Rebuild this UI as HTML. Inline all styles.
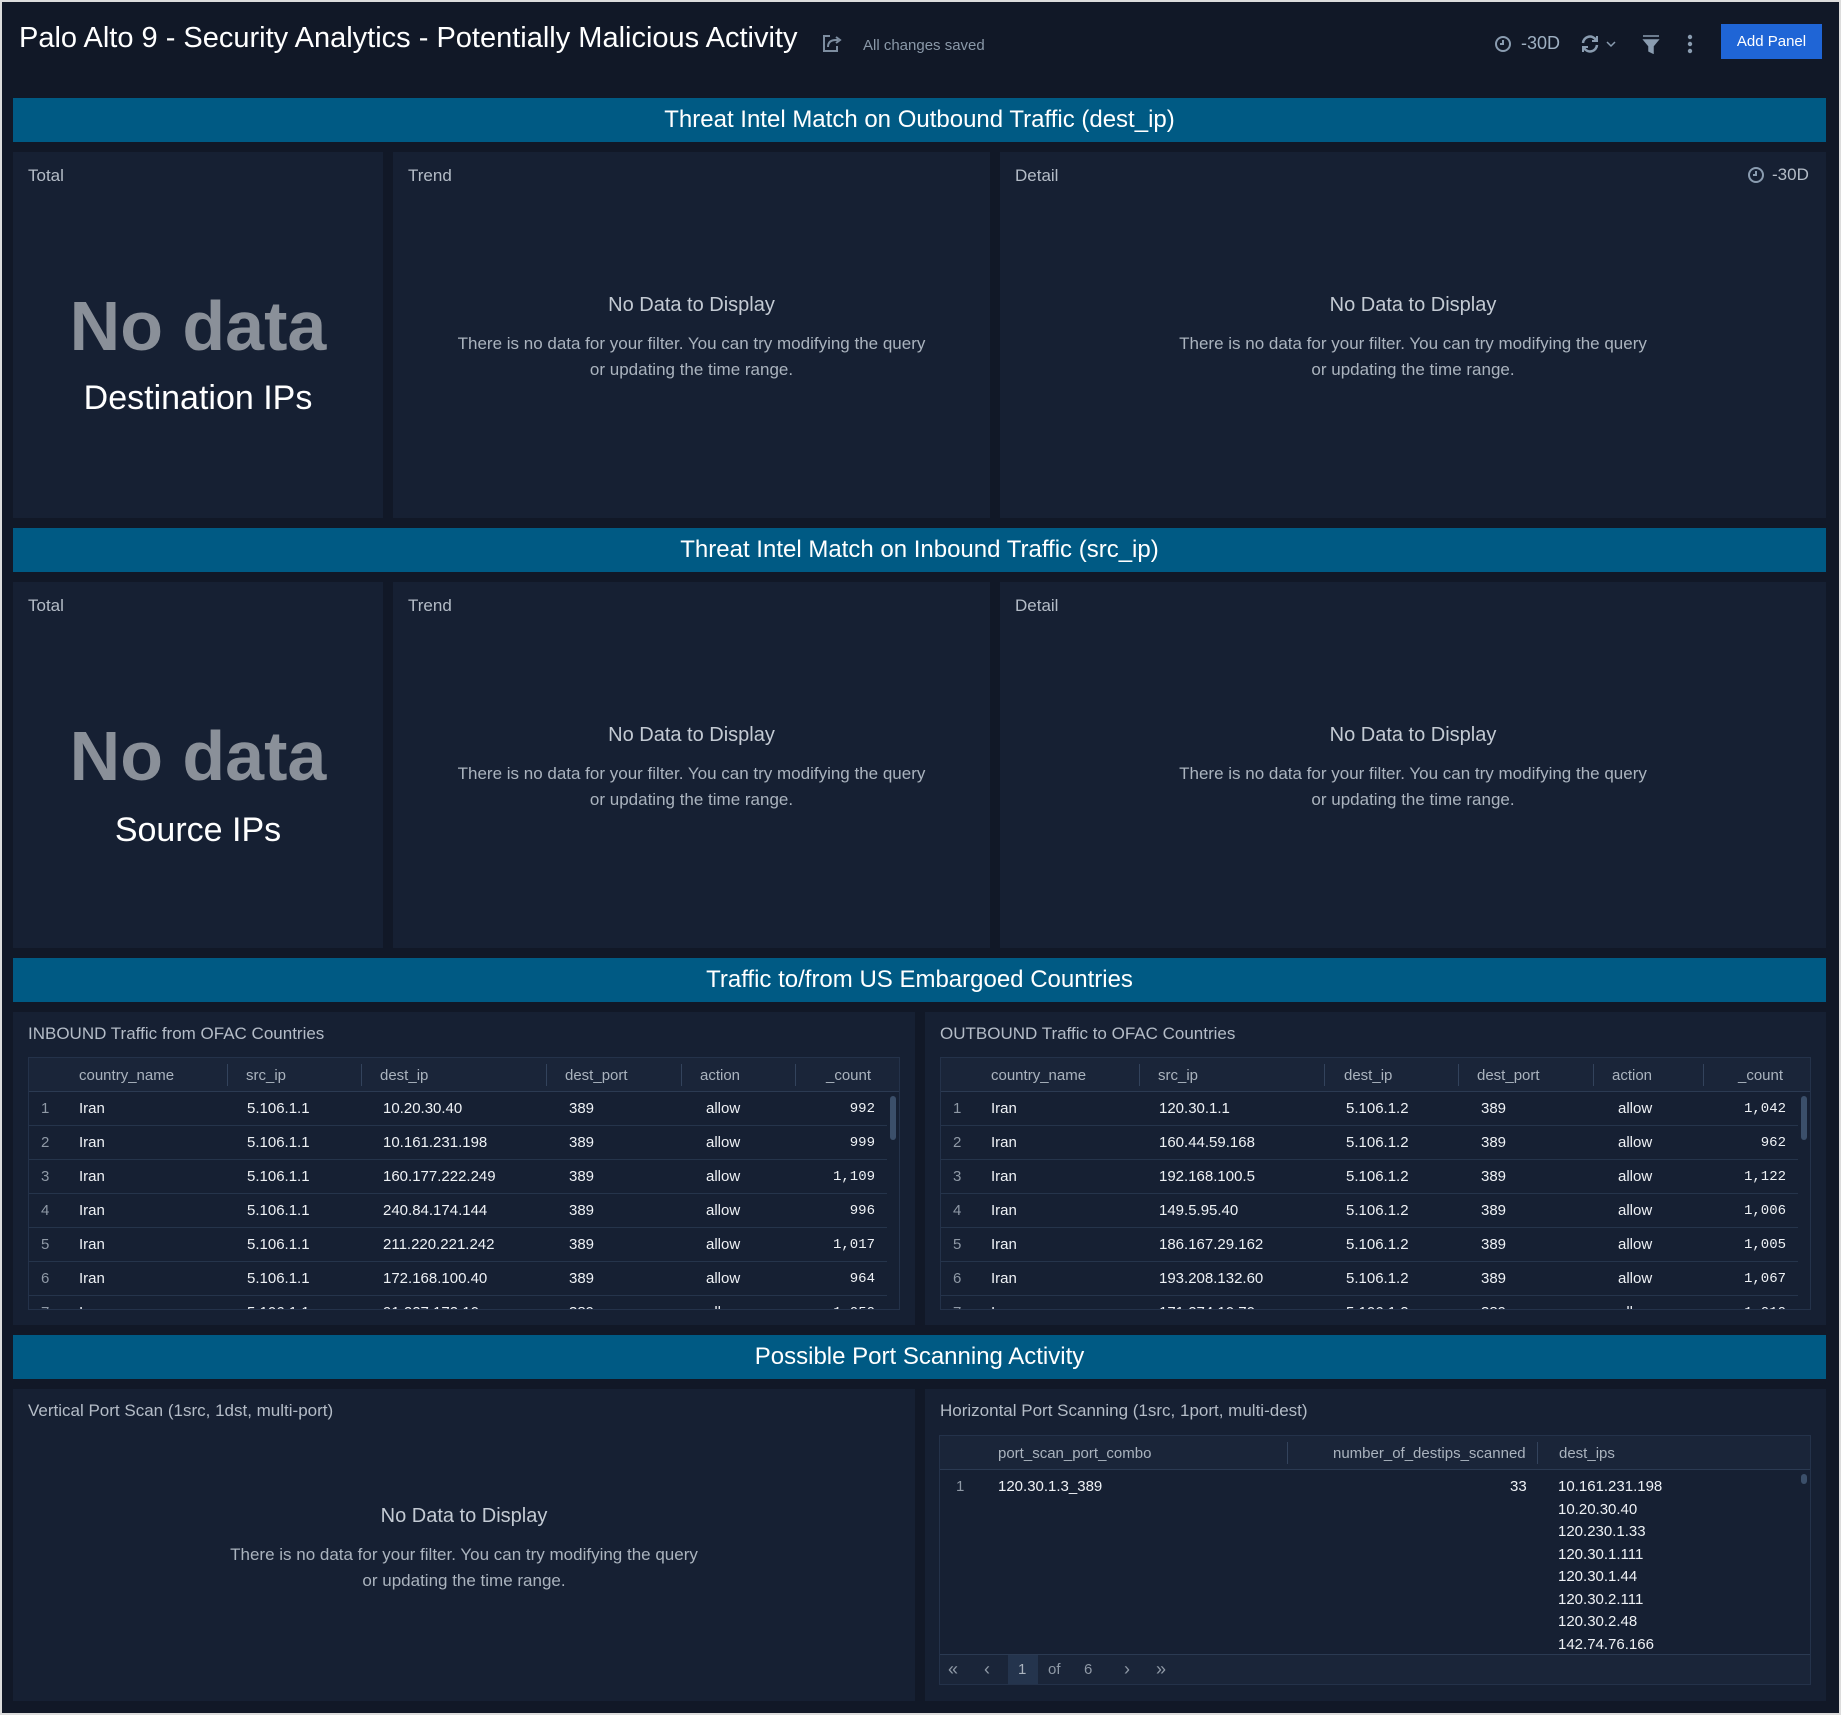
<!DOCTYPE html>
<html><head><meta charset="utf-8"><style>
*{margin:0;padding:0;box-sizing:border-box}
body{width:1841px;height:1715px;background:#dcdcdc;font-family:"Liberation Sans",sans-serif;position:relative;overflow:hidden}
#pg{position:absolute;left:2px;top:2px;width:1837px;height:1711px;background:#111827}
.a{position:absolute}
.band{position:absolute;left:13px;width:1813px;height:44px;background:#005a84;color:#fff;font-size:24px;text-align:center;line-height:44px}
.p{position:absolute;background:#162033}
.pt{position:absolute;left:15px;top:14px;color:#b4bcc7;font-size:17px}
.nd{position:absolute;left:0;right:0;text-align:center}
.nd b{display:block;color:#c3cad3;font-size:20px;font-weight:normal;margin-bottom:14px}
.nd span{color:#aab3be;font-size:17px;line-height:26px}
.big{position:absolute;left:0;right:0;text-align:center;color:#8a9099;font-size:70px;font-weight:bold}
.sub{position:absolute;left:0;right:0;text-align:center;color:#fff;font-size:34px}
.tb{position:absolute;border:1px solid #24324a;overflow:hidden;background:#162033}
.th{position:absolute;left:0;right:0;top:0;height:34px;background:#1a2539;border-bottom:1px solid #2b3a52}
.c{position:absolute;font-size:15px;color:#eef1f5;white-space:nowrap}
.h{color:#aab3be;top:9px}
.sep{position:absolute;top:6px;width:1px;height:22px;background:#33435c}
.r{position:absolute;left:0;right:12px;height:34px;border-bottom:1px solid #25344b}
.n{color:#8f99a6}
.m{font-family:"Liberation Mono",monospace;font-size:14px}
</style></head><body><div id="pg"></div>

<div class="a" style="left:19px;top:22px;color:#fff;font-size:29px">Palo Alto 9 - Security Analytics - Potentially Malicious Activity</div>
<svg class="a" style="left:822px;top:33px" width="20" height="20" viewBox="0 0 20 20"><path d="M8 3H2v15h13v-5" fill="none" stroke="#7d8da0" stroke-width="2"/><path d="M6 14c0-5 3-7 8-7h2M14 4l4 3-4 3" fill="none" stroke="#7d8da0" stroke-width="2"/></svg>
<div class="a" style="left:863px;top:37px;color:#8a98a8;font-size:15px">All changes saved</div>
<svg class="a" style="left:1494px;top:35px" width="18" height="18" viewBox="0 0 18 18"><circle cx="9" cy="9" r="7" fill="none" stroke="#8a9cb0" stroke-width="2"/><path d="M9 5v4H6" fill="none" stroke="#8a9cb0" stroke-width="2"/></svg>
<div class="a" style="left:1521px;top:33px;color:#9fb0c2;font-size:18px">-30D</div>
<svg class="a" style="left:1580px;top:34px" width="40" height="20" viewBox="0 0 40 20"><path d="M3 9a7 7 0 0 1 13-3M17 11a7 7 0 0 1-13 3" fill="none" stroke="#8a9cb0" stroke-width="2.5"/><path d="M17 2v5h-5M3 18v-5h5" fill="none" stroke="#8a9cb0" stroke-width="2"/><path d="M27 8l4 4 4-4" fill="none" stroke="#8a9cb0" stroke-width="1.5"/></svg>
<svg class="a" style="left:1641px;top:34px" width="20" height="20" viewBox="0 0 20 20"><path d="M2 2h16M3 6h14l-5 6v7l-4-2v-5z" fill="#8a9cb0" stroke="#8a9cb0" stroke-width="1.5"/></svg>
<svg class="a" style="left:1686px;top:33px" width="8" height="22" viewBox="0 0 8 22"><circle cx="4" cy="4" r="2.2" fill="#8a9cb0"/><circle cx="4" cy="11" r="2.2" fill="#8a9cb0"/><circle cx="4" cy="18" r="2.2" fill="#8a9cb0"/></svg>
<div class="a" style="left:1721px;top:24px;width:101px;height:35px;background:#1f65d6;color:#fff;font-size:15px;text-align:center;line-height:35px">Add Panel</div>

<div class="band" style="top:98px">Threat Intel Match on Outbound Traffic (dest_ip)</div>
<div class="p" style="left:13px;top:152px;width:370px;height:366px"><div class="pt">Total</div><div class="big" style="top:134px">No data</div><div class="sub" style="top:227px">Destination IPs</div></div>
<div class="p" style="left:393px;top:152px;width:597px;height:366px"><div class="pt">Trend</div><div class="nd" style="top:142px"><b>No Data to Display</b><span>There is no data for your filter. You can try modifying the query<br>or updating the time range.</span></div></div>
<div class="p" style="left:1000px;top:152px;width:826px;height:366px"><div class="pt">Detail</div>
<svg class="a" style="left:747px;top:14px" width="18" height="18" viewBox="0 0 18 18"><circle cx="9" cy="9" r="7" fill="none" stroke="#8a9cb0" stroke-width="2"/><path d="M9 5v4H6" fill="none" stroke="#8a9cb0" stroke-width="2"/></svg>
<div class="a" style="left:772px;top:13px;color:#b4bcc7;font-size:17px">-30D</div>
<div class="nd" style="top:142px"><b>No Data to Display</b><span>There is no data for your filter. You can try modifying the query<br>or updating the time range.</span></div></div>

<div class="band" style="top:528px">Threat Intel Match on Inbound Traffic (src_ip)</div>
<div class="p" style="left:13px;top:582px;width:370px;height:366px"><div class="pt">Total</div><div class="big" style="top:134px">No data</div><div class="sub" style="top:229px">Source IPs</div></div>
<div class="p" style="left:393px;top:582px;width:597px;height:366px"><div class="pt">Trend</div><div class="nd" style="top:142px"><b>No Data to Display</b><span>There is no data for your filter. You can try modifying the query<br>or updating the time range.</span></div></div>
<div class="p" style="left:1000px;top:582px;width:826px;height:366px"><div class="pt">Detail</div><div class="nd" style="top:142px"><b>No Data to Display</b><span>There is no data for your filter. You can try modifying the query<br>or updating the time range.</span></div></div>

<div class="band" style="top:958px">Traffic to/from US Embargoed Countries</div>

<div class="p" style="left:13px;top:1012px;width:902px;height:313px"><div class="pt" style="top:12px">INBOUND Traffic from OFAC Countries</div>
<div class="tb" style="left:15px;top:45px;width:872px;height:253px">
<div class="th"><div class="c h" style="left:50px">country_name</div><div class="sep" style="left:198px"></div><div class="c h" style="left:217px">src_ip</div><div class="sep" style="left:332px"></div><div class="c h" style="left:351px">dest_ip</div><div class="sep" style="left:517px"></div><div class="c h" style="left:536px">dest_port</div><div class="sep" style="left:652px"></div><div class="c h" style="left:671px">action</div><div class="sep" style="left:766px"></div><div class="c h" style="left:797px">_count</div></div>
<div class="r" style="top:34px"><div class="c n" style="left:12px;top:8px">1</div><div class="c" style="left:50px;top:8px">Iran</div><div class="c" style="left:218px;top:8px">5.106.1.1</div><div class="c" style="left:354px;top:8px">10.20.30.40</div><div class="c" style="left:540px;top:8px">389</div><div class="c" style="left:677px;top:8px">allow</div><div class="c m" style="right:12px;top:9px">992</div></div>
<div class="r" style="top:68px"><div class="c n" style="left:12px;top:8px">2</div><div class="c" style="left:50px;top:8px">Iran</div><div class="c" style="left:218px;top:8px">5.106.1.1</div><div class="c" style="left:354px;top:8px">10.161.231.198</div><div class="c" style="left:540px;top:8px">389</div><div class="c" style="left:677px;top:8px">allow</div><div class="c m" style="right:12px;top:9px">999</div></div>
<div class="r" style="top:102px"><div class="c n" style="left:12px;top:8px">3</div><div class="c" style="left:50px;top:8px">Iran</div><div class="c" style="left:218px;top:8px">5.106.1.1</div><div class="c" style="left:354px;top:8px">160.177.222.249</div><div class="c" style="left:540px;top:8px">389</div><div class="c" style="left:677px;top:8px">allow</div><div class="c m" style="right:12px;top:9px">1,109</div></div>
<div class="r" style="top:136px"><div class="c n" style="left:12px;top:8px">4</div><div class="c" style="left:50px;top:8px">Iran</div><div class="c" style="left:218px;top:8px">5.106.1.1</div><div class="c" style="left:354px;top:8px">240.84.174.144</div><div class="c" style="left:540px;top:8px">389</div><div class="c" style="left:677px;top:8px">allow</div><div class="c m" style="right:12px;top:9px">996</div></div>
<div class="r" style="top:170px"><div class="c n" style="left:12px;top:8px">5</div><div class="c" style="left:50px;top:8px">Iran</div><div class="c" style="left:218px;top:8px">5.106.1.1</div><div class="c" style="left:354px;top:8px">211.220.221.242</div><div class="c" style="left:540px;top:8px">389</div><div class="c" style="left:677px;top:8px">allow</div><div class="c m" style="right:12px;top:9px">1,017</div></div>
<div class="r" style="top:204px"><div class="c n" style="left:12px;top:8px">6</div><div class="c" style="left:50px;top:8px">Iran</div><div class="c" style="left:218px;top:8px">5.106.1.1</div><div class="c" style="left:354px;top:8px">172.168.100.40</div><div class="c" style="left:540px;top:8px">389</div><div class="c" style="left:677px;top:8px">allow</div><div class="c m" style="right:12px;top:9px">964</div></div>
<div class="r" style="top:238px"><div class="c n" style="left:12px;top:8px">7</div><div class="c" style="left:50px;top:8px">Iran</div><div class="c" style="left:218px;top:8px">5.106.1.1</div><div class="c" style="left:354px;top:8px">91.227.172.10</div><div class="c" style="left:540px;top:8px">389</div><div class="c" style="left:677px;top:8px">allow</div><div class="c m" style="right:12px;top:9px">1,050</div></div>
<div class="a" style="right:3px;top:38px;width:6px;height:44px;border-radius:3px;background:#3b4f6a"></div>
</div></div>

<div class="p" style="left:925px;top:1012px;width:901px;height:313px"><div class="pt" style="top:12px">OUTBOUND Traffic to OFAC Countries</div>
<div class="tb" style="left:15px;top:45px;width:871px;height:253px">
<div class="th"><div class="c h" style="left:50px">country_name</div><div class="sep" style="left:198px"></div><div class="c h" style="left:217px">src_ip</div><div class="sep" style="left:383px"></div><div class="c h" style="left:403px">dest_ip</div><div class="sep" style="left:517px"></div><div class="c h" style="left:536px">dest_port</div><div class="sep" style="left:652px"></div><div class="c h" style="left:671px">action</div><div class="sep" style="left:762px"></div><div class="c h" style="left:797px">_count</div></div>
<div class="r" style="top:34px"><div class="c n" style="left:12px;top:8px">1</div><div class="c" style="left:50px;top:8px">Iran</div><div class="c" style="left:218px;top:8px">120.30.1.1</div><div class="c" style="left:405px;top:8px">5.106.1.2</div><div class="c" style="left:540px;top:8px">389</div><div class="c" style="left:677px;top:8px">allow</div><div class="c m" style="right:12px;top:9px">1,042</div></div>
<div class="r" style="top:68px"><div class="c n" style="left:12px;top:8px">2</div><div class="c" style="left:50px;top:8px">Iran</div><div class="c" style="left:218px;top:8px">160.44.59.168</div><div class="c" style="left:405px;top:8px">5.106.1.2</div><div class="c" style="left:540px;top:8px">389</div><div class="c" style="left:677px;top:8px">allow</div><div class="c m" style="right:12px;top:9px">962</div></div>
<div class="r" style="top:102px"><div class="c n" style="left:12px;top:8px">3</div><div class="c" style="left:50px;top:8px">Iran</div><div class="c" style="left:218px;top:8px">192.168.100.5</div><div class="c" style="left:405px;top:8px">5.106.1.2</div><div class="c" style="left:540px;top:8px">389</div><div class="c" style="left:677px;top:8px">allow</div><div class="c m" style="right:12px;top:9px">1,122</div></div>
<div class="r" style="top:136px"><div class="c n" style="left:12px;top:8px">4</div><div class="c" style="left:50px;top:8px">Iran</div><div class="c" style="left:218px;top:8px">149.5.95.40</div><div class="c" style="left:405px;top:8px">5.106.1.2</div><div class="c" style="left:540px;top:8px">389</div><div class="c" style="left:677px;top:8px">allow</div><div class="c m" style="right:12px;top:9px">1,006</div></div>
<div class="r" style="top:170px"><div class="c n" style="left:12px;top:8px">5</div><div class="c" style="left:50px;top:8px">Iran</div><div class="c" style="left:218px;top:8px">186.167.29.162</div><div class="c" style="left:405px;top:8px">5.106.1.2</div><div class="c" style="left:540px;top:8px">389</div><div class="c" style="left:677px;top:8px">allow</div><div class="c m" style="right:12px;top:9px">1,005</div></div>
<div class="r" style="top:204px"><div class="c n" style="left:12px;top:8px">6</div><div class="c" style="left:50px;top:8px">Iran</div><div class="c" style="left:218px;top:8px">193.208.132.60</div><div class="c" style="left:405px;top:8px">5.106.1.2</div><div class="c" style="left:540px;top:8px">389</div><div class="c" style="left:677px;top:8px">allow</div><div class="c m" style="right:12px;top:9px">1,067</div></div>
<div class="r" style="top:238px"><div class="c n" style="left:12px;top:8px">7</div><div class="c" style="left:50px;top:8px">Iran</div><div class="c" style="left:218px;top:8px">171.274.10.70</div><div class="c" style="left:405px;top:8px">5.106.1.2</div><div class="c" style="left:540px;top:8px">389</div><div class="c" style="left:677px;top:8px">allow</div><div class="c m" style="right:12px;top:9px">1,010</div></div>
<div class="a" style="right:3px;top:38px;width:6px;height:44px;border-radius:3px;background:#3b4f6a"></div>
</div></div>

<div class="band" style="top:1335px">Possible Port Scanning Activity</div>

<div class="p" style="left:13px;top:1389px;width:902px;height:312px"><div class="pt" style="top:12px">Vertical Port Scan (1src, 1dst, multi-port)</div><div class="nd" style="top:116px"><b>No Data to Display</b><span>There is no data for your filter. You can try modifying the query<br>or updating the time range.</span></div></div>

<div class="p" style="left:925px;top:1389px;width:901px;height:312px"><div class="pt" style="top:12px">Horizontal Port Scanning (1src, 1port, multi-dest)</div>
<div class="tb" style="left:14px;top:46px;width:872px;height:250px">
<div class="th" style="height:34px"><div class="c h" style="left:58px">port_scan_port_combo</div><div class="sep" style="left:347px"></div><div class="c h" style="left:393px">number_of_destips_scanned</div><div class="sep" style="left:597px"></div><div class="c h" style="left:619px">dest_ips</div></div>
<div class="c n" style="left:16px;top:42px">1</div><div class="c" style="left:58px;top:42px">120.30.1.3_389</div><div class="c" style="left:570px;top:42px">33</div>
<div class="c" style="left:618px;top:40px;line-height:22.5px">10.161.231.198<br>10.20.30.40<br>120.230.1.33<br>120.30.1.111<br>120.30.1.44<br>120.30.2.111<br>120.30.2.48<br>142.74.76.166</div>
<div class="a" style="right:3px;top:38px;width:6px;height:10px;border-radius:3px;background:#3b4f6a"></div>
<div class="a" style="left:0;right:0;bottom:0;height:30px;background:#1a2539;border-top:1px solid #2b3a52">
<div class="c n" style="left:8px;top:4px;font-size:18px">«</div><div class="c n" style="left:44px;top:4px;font-size:18px">‹</div>
<div class="a" style="left:68px;top:0;width:30px;height:30px;background:#24344d"></div><div class="c" style="left:78px;top:6px;color:#aab3be">1</div>
<div class="c n" style="left:108px;top:6px">of</div><div class="c n" style="left:144px;top:6px">6</div>
<div class="c n" style="left:184px;top:4px;font-size:18px">›</div><div class="c n" style="left:216px;top:4px;font-size:18px">»</div></div>
</div></div>
</body></html>
